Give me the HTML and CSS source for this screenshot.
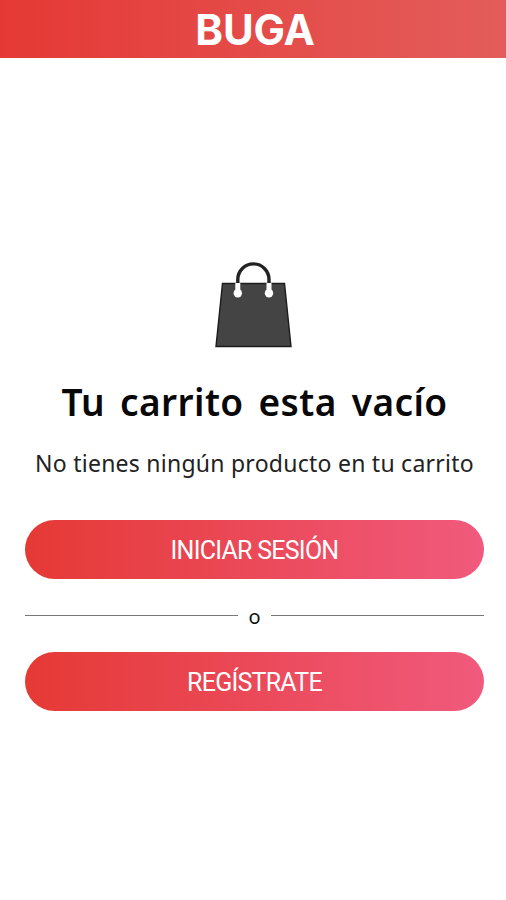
FILE: index.html
```html
<!DOCTYPE html>
<html lang="es">
<head>
    <meta charset="UTF-8">
    <meta name="viewport" content="width=device-width, initial-scale=1.0">
    <title>Carrito - BUGA</title>
    <link rel="stylesheet" href="styles.css">
</head>
<body>

    <!-- Top bar -->
    <header class="header">
        <span class="logo">BUGA</span>
    </header>

    <!-- Empty cart message -->
    <main class="content">
        <svg class="bag" viewBox="0 0 80 88" width="80" height="88" aria-hidden="true">
            <path d="M9.5 22.5H71.5L78 85.5H3Z" fill="#444" stroke="#1c1c1c" stroke-width="1.4"/>
            <path d="M24.8 22V33M56 22V33" stroke="#fff" stroke-width="5"/>
            <circle cx="24.8" cy="32.3" r="4.2" fill="#fff"/>
            <circle cx="56" cy="32.3" r="4.2" fill="#fff"/>
            <path d="M24.8 22V18.5A15.6 15.6 0 0 1 56 18.5V22" fill="none" stroke="#222" stroke-width="3.4"/>
        </svg>

        <h1 class="title">Tu carrito esta vacío</h1>
        <p class="message">No tienes ningún producto en tu carrito</p>

        <!-- Account buttons -->
        <div class="actions">
            <button class="button" type="button">INICIAR SESIÓN</button>
            <div class="divider"><span>o</span></div>
            <button class="button" type="button">REGÍSTRATE</button>
        </div>
    </main>

</body>
</html>
```
FILE: styles.css
```css
body {
    margin: 0;
    min-height: 100vh;
    background-color: #fff;
    font-family: "Noto Sans", sans-serif;
}

/* Top bar with the brand name */
.header {
    display: flex;
    justify-content: center;
    height: 58px;
    background: linear-gradient(to right, #e53935, #e35d5b);
}

.logo {
    padding-left: 4px;
    color: #fff;
    font-family: Inter, sans-serif;
    font-size: 42px;
    font-weight: 700;
    line-height: 60px;
    letter-spacing: -0.2px;
}

/* Everything below the bar, centered */
.content {
    display: flex;
    flex-direction: column;
    align-items: center;
    padding: 203px 22px 0 25px;
    color: #111;
}

.bag {
    display: block;
    margin-right: 3px;
}

.title {
    margin: 28px 0 0;
    color: #080808;
    font-size: 37px;
    font-weight: 600;
    line-height: 50px;
    letter-spacing: 0.4px;
    word-spacing: 5px;
    white-space: nowrap;
}

.message {
    margin: 20px 0 0;
    color: #222;
    font-size: 23px;
    line-height: 32px;
    letter-spacing: 0.25px;
    white-space: nowrap;
}

.actions {
    width: 100%;
    margin-top: 41px;
}

.button {
    display: block;
    width: 100%;
    height: 59px;
    padding: 2px 0 0;
    border: none;
    border-radius: 30px;
    background: linear-gradient(to right, #e53935, #f15a7d);
    color: #fff;
    font-family: Roboto, sans-serif;
    font-size: 25px;
    letter-spacing: -0.75px;
}

/* Line - o - line */
.divider {
    display: flex;
    align-items: center;
    height: 73px;
    font-size: 20px;
}

.divider::before,
.divider::after {
    content: "";
    flex: 1;
    height: 1px;
    background-color: #777;
}

.divider span {
    padding: 2px 10px 0;
}
```
